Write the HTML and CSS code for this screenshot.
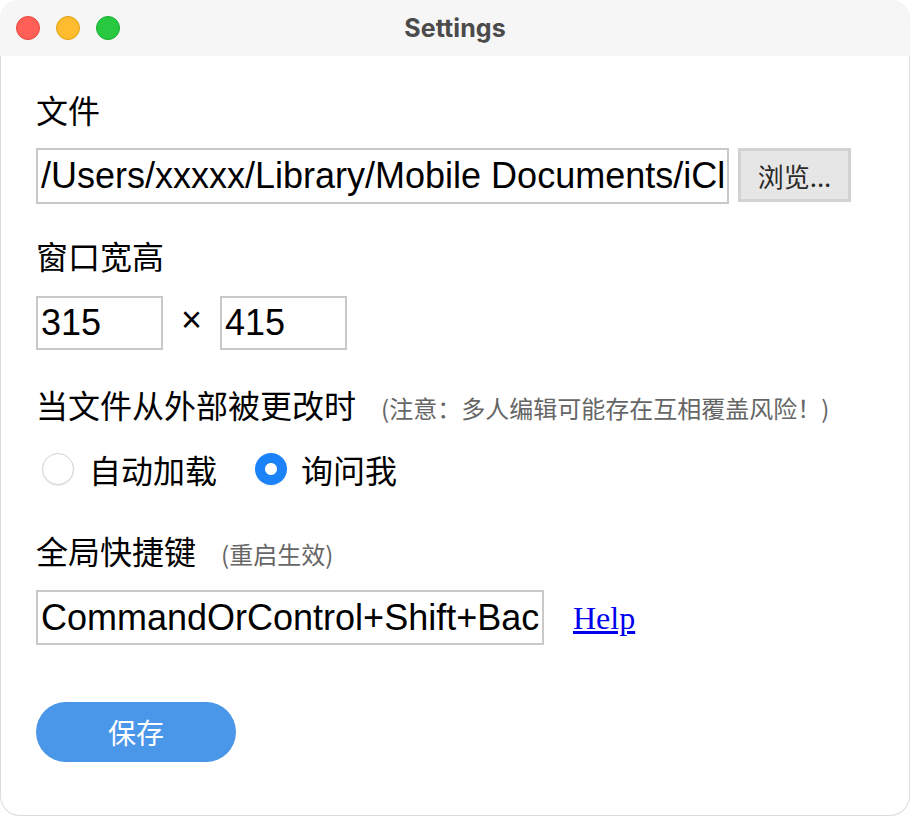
FILE: index.html
```html
<!DOCTYPE html>
<html lang="zh-CN">
<head>
<meta charset="utf-8">
<title>Settings</title>
<link rel="stylesheet" href="styles.css">
</head>
<body>
<div class="window">
  <header class="titlebar">
    <div class="lights">
      <span class="light red"></span>
      <span class="light yellow"></span>
      <span class="light green"></span>
    </div>
    <div class="title">Settings</div>
    <div></div>
  </header>
  <main class="content">
    <div class="label">文件</div>
    <div class="row file-row">
      <input class="field path" type="text" value="/Users/xxxxx/Library/Mobile Documents/iCloud~com~apple~CloudDocs/notes.md">
      <button class="browse" type="button">浏览...</button>
    </div>

    <div class="label size-label">窗口宽高</div>
    <div class="row size-row">
      <input class="field size" type="text" value="315">
      <span class="times">×</span>
      <input class="field size" type="text" value="415">
    </div>

    <div class="label change-label">当文件从外部被更改时<span class="note">(注意：多人编辑可能存在互相覆盖风险！)</span></div>
    <div class="row radio-row">
      <label class="radio"><input type="radio" name="mode"><span>自动加载</span></label>
      <label class="radio"><input type="radio" name="mode" checked><span>询问我</span></label>
    </div>

    <div class="label shortcut-label">全局快捷键<span class="note">(重启生效)</span></div>
    <div class="row shortcut-row">
      <input class="field shortcut" type="text" value="CommandOrControl+Shift+Backspace">
      <a class="help" href="#">Help</a>
    </div>

    <button class="save" type="button">保存</button>
  </main>
</div>
</body>
</html>
```

FILE: styles.css
```css
html, body {
  margin: 0;
  padding: 0;
  background: #ffffff;
}

.window {
  width: 910px;
  height: 816px;
  box-sizing: border-box;
  border-radius: 20px;
  overflow: hidden;
  background: #ffffff;
  box-shadow: inset 0 0 0 1px #dcdcdc;
  font-family: "Noto Sans CJK SC", "Liberation Sans", sans-serif;
  color: #000;
}

.titlebar {
  height: 56px;
  background: #f6f6f6;
  display: grid;
  grid-template-columns: 1fr auto 1fr;
  align-items: center;
}

.lights {
  display: flex;
  gap: 16px;
  padding-left: 16px;
}

.light {
  width: 24px;
  height: 24px;
  border-radius: 50%;
  box-sizing: border-box;
}
.red { background: #ff5f57; border: 1px solid #e2463f; }
.yellow { background: #febc2e; border: 1px solid #e1a116; }
.green { background: #28c840; border: 1px solid #14ae2b; }

.title {
  font-family: "Inter", "Liberation Sans", sans-serif;
  font-weight: 700;
  font-size: 25px;
  color: #4b4b4b;
  letter-spacing: 0.1px;
}

.content {
  padding: 33px 0 0 36px;
}

.label {
  font-size: 32px;
  line-height: 40px;
  height: 40px;
  white-space: nowrap;
}

.size-label { margin-top: 31px; }
.change-label { margin-top: 34px; }
.shortcut-label { margin-top: 41px; }

.note {
  font-size: 24px;
  color: #666;
  margin-left: 25px;
}

.row {
  display: flex;
  align-items: center;
}

.file-row { margin-top: 19px; }
.size-row { margin-top: 21px; }
.radio-row { margin-top: 25px; height: 40px; }
.shortcut-row { margin-top: 20px; }

.field {
  box-sizing: border-box;
  border: 2px solid #c9c9c9;
  border-radius: 0;
  outline: none;
  background: #fff;
  padding: 0 3px;
  margin: 0;
  font-family: "Liberation Sans", Arial, sans-serif;
  font-size: 36px;
  color: #000;
}

.path {
  width: 693px;
  height: 56px;
}

.browse {
  margin-left: 9px;
  width: 113px;
  height: 54px;
  margin-top: -2px;
  box-sizing: border-box;
  background: #e6e6e6;
  border: 3px solid #d2d2d2;
  border-radius: 0;
  font-family: "Noto Sans CJK SC", sans-serif;
  font-size: 26px;
  color: #2a2a2a;
  padding: 0;
}

.size {
  width: 127px;
  height: 54px;
}

.times {
  font-family: "Liberation Sans", Arial, sans-serif;
  font-size: 36px;
  width: 57px;
  text-align: center;
  margin-top: -6px;
}

.radio {
  display: flex;
  align-items: center;
  font-size: 32px;
  line-height: 40px;
  margin-right: 38px;
}

.radio:first-child { margin-left: 6px; }

.radio input {
  appearance: none;
  -webkit-appearance: none;
  width: 32px;
  height: 32px;
  margin: 0 15px 0 0;
  border-radius: 50%;
  box-sizing: border-box;
  border: 1px solid #d4d4d4;
  background: #fff;
  box-shadow: 0 1px 1px rgba(0, 0, 0, 0.08);
}

.radio input:checked {
  border: none;
  background: radial-gradient(circle, #ffffff 0 5.5px, #1b83f7 6.5px);
}

.radio:last-child input { margin-right: 14px; }

.shortcut {
  width: 508px;
  height: 55px;
}

.help {
  margin-left: 29px;
  font-family: "Liberation Serif", "Times New Roman", serif;
  font-size: 32px;
  color: #0000ee;
  text-decoration: underline;
  margin-top: 2px;
}

.save {
  display: block;
  margin-top: 57px;
  width: 200px;
  height: 60px;
  border: none;
  border-radius: 30px;
  background: #4a96e8;
  color: #fff;
  font-family: "Noto Sans CJK SC", sans-serif;
  font-size: 28px;
  padding: 0;
}
```
